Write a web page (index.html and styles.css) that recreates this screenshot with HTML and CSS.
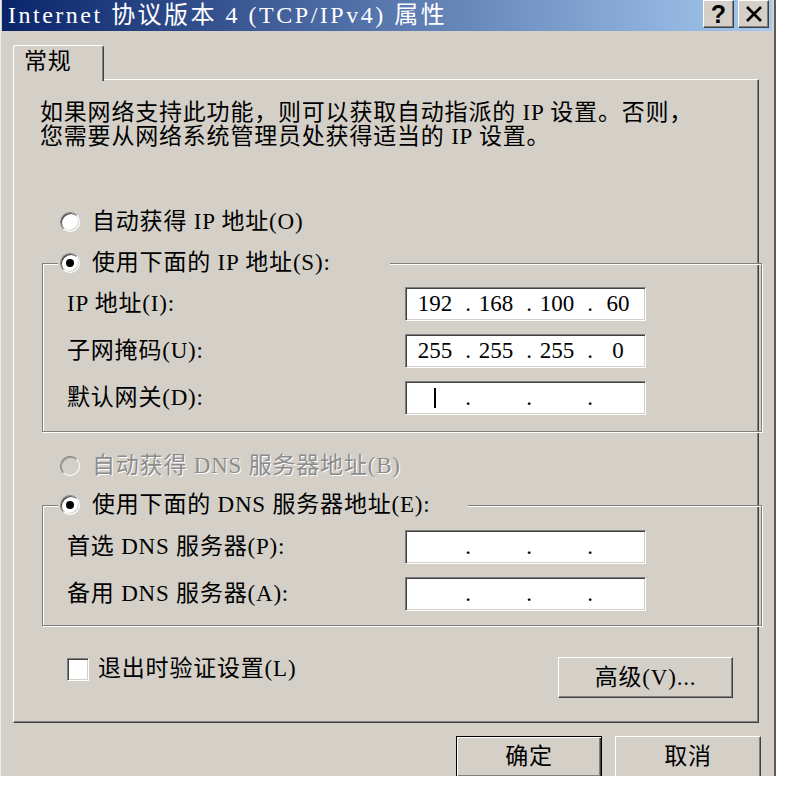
FILE: index.html
```html
<!DOCTYPE html>
<html lang="zh-CN">
<head>
  <meta charset="UTF-8" />
  <title>Internet 协议版本 4 (TCP/IPv4) 属性</title>
  <link rel="stylesheet" href="styles.css">
</head>
<body>
  <div class="dialog">
    <div class="title-bar">
      <span class="title-text">Internet 协议版本 4 (TCP/IPv4) 属性</span>
      <div class="title-buttons">
        <button class="title-btn help" type="button" aria-label="帮助">?</button>
        <button class="title-btn close" type="button" aria-label="关闭">
          <svg width="20" height="20" viewBox="0 0 20 20" aria-hidden="true">
            <path d="M3 3 L17 17 M17 3 L3 17" stroke="#000" stroke-width="2.6" fill="none" />
          </svg>
        </button>
      </div>
    </div>

    <div class="tabs">
      <div class="tab">常规</div>
    </div>

    <div class="tab-page">
      <p class="intro">如果网络支持此功能，则可以获取自动指派的 IP 设置。否则，<br>您需要从网络系统管理员处获得适当的 IP 设置。</p>

      <div class="radio-row">
        <span class="radio"></span>
        <span>自动获得 IP 地址(O)</span>
      </div>

      <fieldset class="group group-ip">
        <legend class="group-legend legend-ip">
          <span class="radio checked"></span>
          <span>使用下面的 IP 地址(S):</span>
        </legend>
        <div class="field-list">
          <div class="field-row">
            <span class="field-label">IP 地址(I):</span>
            <div class="ip-box">
              <span class="octet">192</span><span class="dot">.</span><span class="octet">168</span><span class="dot">.</span><span class="octet">100</span><span class="dot">.</span><span class="octet">60</span>
            </div>
          </div>
          <div class="field-row">
            <span class="field-label">子网掩码(U):</span>
            <div class="ip-box">
              <span class="octet">255</span><span class="dot">.</span><span class="octet">255</span><span class="dot">.</span><span class="octet">255</span><span class="dot">.</span><span class="octet">0</span>
            </div>
          </div>
          <div class="field-row">
            <span class="field-label">默认网关(D):</span>
            <div class="ip-box">
              <span class="octet"><span class="caret"></span></span><span class="dot">.</span><span class="octet"></span><span class="dot">.</span><span class="octet"></span><span class="dot">.</span><span class="octet"></span>
            </div>
          </div>
        </div>
      </fieldset>

      <div class="radio-row disabled">
        <span class="radio"></span>
        <span>自动获得 DNS 服务器地址(B)</span>
      </div>

      <fieldset class="group group-dns">
        <legend class="group-legend legend-dns">
          <span class="radio checked"></span>
          <span>使用下面的 DNS 服务器地址(E):</span>
        </legend>
        <div class="field-list">
          <div class="field-row">
            <span class="field-label">首选 DNS 服务器(P):</span>
            <div class="ip-box">
              <span class="octet"></span><span class="dot">.</span><span class="octet"></span><span class="dot">.</span><span class="octet"></span><span class="dot">.</span><span class="octet"></span>
            </div>
          </div>
          <div class="field-row">
            <span class="field-label">备用 DNS 服务器(A):</span>
            <div class="ip-box">
              <span class="octet"></span><span class="dot">.</span><span class="octet"></span><span class="dot">.</span><span class="octet"></span><span class="dot">.</span><span class="octet"></span>
            </div>
          </div>
        </div>
      </fieldset>

      <div class="page-footer">
        <div class="check-row">
          <span class="checkbox"></span>
          <span>退出时验证设置(L)</span>
        </div>
        <button class="win-btn advanced" type="button">高级(V)...</button>
      </div>
    </div>

    <div class="dialog-buttons">
      <button class="win-btn default" type="button">确定</button>
      <button class="win-btn" type="button">取消</button>
    </div>
  </div>
</body>
</html>
```

FILE: styles.css
```css
* {
  box-sizing: border-box;
}

body {
  margin: 0;
  background-color: white;
  font-family: "Liberation Serif", "Noto Sans CJK SC", sans-serif;
  font-size: 23px;
  letter-spacing: 0.8px;
  color: #000;
}

.dialog {
  width: 776px;
  height: 776px;
  overflow: hidden;
  background-color: #d4d0c8;
  border-left: 1px solid #ececec;
  border-right: 2px solid #5a5a5a;
  padding: 0 2px 0 1px;
}

/* barra de título */
.title-bar {
  height: 31px;
  display: flex;
  justify-content: space-between;
  background: linear-gradient(to right, #0a246a, #a6caf0);
  padding: 0 3px 0 6px;
}

.title-text {
  color: white;
  font-size: 24px;
  line-height: 31px;
  letter-spacing: 2.5px;
  white-space: nowrap;
}

.title-buttons {
  display: flex;
  gap: 4px;
}

.title-btn {
  width: 31px;
  height: 28px;
  padding: 0;
  background-color: #d4d0c8;
  border: 1px solid;
  border-color: #fff #404040 #404040 #fff;
  box-shadow: inset -1px -1px 0 #808080;
  display: flex;
  align-items: center;
  justify-content: center;
}

.title-btn.help {
  font-family: "Liberation Sans", sans-serif;
  font-weight: 700;
  font-size: 25px;
  line-height: 1;
  letter-spacing: 0;
}

/* pestañas */
.tabs {
  display: flex;
  height: 34px;
  margin-top: 14px;
  padding-left: 11px;
  position: relative;
  z-index: 1;
}

.tab {
  width: 91px;
  height: 36px;
  background-color: #d4d0c8;
  border-top: 1px solid #fff;
  border-left: 1px solid #fff;
  border-right: 1px solid #404040;
  border-radius: 3px 3px 0 0;
  box-shadow: inset -1px 0 0 #808080;
  padding: 4px 0 0 10px;
  line-height: 24px;
}

.tab-page {
  margin-left: 11px;
  width: 746px;
  height: 644px;
  border: 1px solid;
  border-color: #fff #404040 #404040 #fff;
  box-shadow: inset -1px -1px 0 #808080;
  padding-left: 26px;
}

.intro {
  margin: 21px 0 0;
  line-height: 24px;
}

.radio-row {
  display: flex;
  align-items: center;
  gap: 12px;
  height: 24px;
  margin-left: 20px;
  margin-top: 61px;
  line-height: 24px;
}

.radio-row.disabled {
  margin-top: 22px;
  color: #8c8c8c;
  text-shadow: 1px 1px 0 #fff;
}

.radio {
  width: 20px;
  height: 20px;
  flex: none;
  border-radius: 50%;
  background-color: #fff;
  border: 1px solid;
  border-color: #808080 #fff #fff #808080;
  box-shadow: inset 1px 1px 0 #404040, inset -1px -1px 0 #d4d0c8;
  position: relative;
}

.radio.checked::after {
  content: "";
  position: absolute;
  left: 5px;
  top: 5px;
  width: 8px;
  height: 8px;
  border-radius: 50%;
  background-color: #000;
}

.disabled .radio {
  background-color: #d4d0c8;
  box-shadow: inset 1px 1px 0 #a0a0a0;
}

/* grupos */
.group {
  margin: 17px 0 0 2px;
  width: 720px;
  border: 1px solid #808080;
  box-shadow: inset 1px 1px 0 #fff, 1px 1px 0 #fff;
  padding: 0 0 16px 15px;
}

.group-dns {
  margin-top: 15px;
  padding-bottom: 14px;
}

.group-legend {
  display: flex;
  align-items: center;
  gap: 12px;
  height: 24px;
  padding: 0 0 0 2px;
  background-color: #d4d0c8;
  line-height: 24px;
}

.legend-ip {
  width: 332px;
}

.legend-dns {
  width: 410px;
}

.field-list {
  display: flex;
  flex-direction: column;
  gap: 13px;
  margin-top: 12px;
  padding-left: 9px;
}

.group-dns .field-list {
  margin-top: 13px;
}

.field-row {
  display: flex;
  align-items: center;
  height: 34px;
}

.field-label {
  width: 338px;
  line-height: 24px;
}

.ip-box {
  width: 241px;
  height: 34px;
  background-color: #fff;
  border: 1px solid;
  border-color: #808080 #fff #fff #808080;
  box-shadow: inset 1px 1px 0 #404040, inset -1px -1px 0 #d4d0c8;
  padding-left: 4px;
  display: flex;
  align-items: center;
  line-height: 24px;
  letter-spacing: 0;
}

.octet {
  width: 50px;
  display: flex;
  justify-content: center;
  align-items: center;
  height: 24px;
}

.dot {
  width: 11px;
  text-align: right;
}

.caret {
  width: 2px;
  height: 20px;
  background-color: #000;
}

/* pie de la pestaña */
.page-footer {
  display: flex;
  justify-content: space-between;
  align-items: flex-start;
  margin-top: 31px;
  padding-right: 25px;
}

.check-row {
  display: flex;
  align-items: center;
  gap: 9px;
  margin-left: 27px;
  line-height: 24px;
}

.checkbox {
  width: 22px;
  height: 23px;
  background-color: #fff;
  border: 1px solid;
  border-color: #808080 #fff #fff #808080;
  box-shadow: inset 1px 1px 0 #404040, inset -1px -1px 0 #d4d0c8;
}

.win-btn {
  font-family: inherit;
  font-size: 23px;
  letter-spacing: 0.8px;
  color: #000;
  background-color: #d4d0c8;
  border: 1px solid;
  border-color: #fff #404040 #404040 #fff;
  box-shadow: inset -1px -1px 0 #808080;
  padding: 0;
  height: 42px;
  line-height: 24px;
}

.win-btn.advanced {
  width: 175px;
  height: 41px;
}

.dialog-buttons {
  display: flex;
  justify-content: flex-end;
  gap: 13px;
  margin-top: 13px;
  padding-right: 11px;
}

.dialog-buttons .win-btn {
  width: 146px;
}

.win-btn.default {
  border: 1px solid #000;
  box-shadow: inset 1px 1px 0 #fff, inset -1px -1px 0 #404040, inset -2px -2px 0 #808080;
}
```
